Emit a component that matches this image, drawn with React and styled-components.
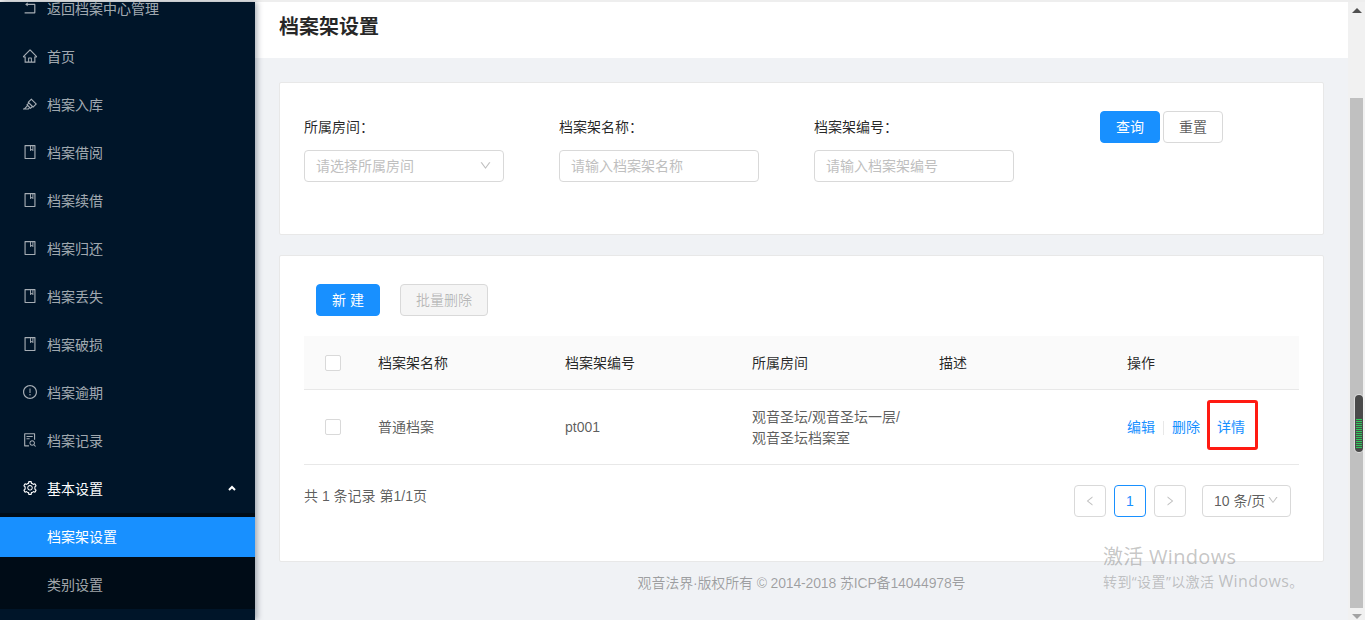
import React from "react";
import styled, { createGlobalStyle } from "styled-components";
import {
  AiOutlineRollback,
  AiOutlineHome,
  AiOutlineHighlight,
  AiOutlineBook,
  AiOutlineExclamationCircle,
  AiOutlineFileSearch,
  AiOutlineSetting,
  AiOutlineDown,
  AiOutlineLeft,
  AiOutlineRight,
} from "react-icons/ai";

const menuItems = [
  { label: "返回档案中心管理", icon: AiOutlineRollback },
  { label: "首页", icon: AiOutlineHome },
  { label: "档案入库", icon: AiOutlineHighlight },
  { label: "档案借阅", icon: AiOutlineBook },
  { label: "档案续借", icon: AiOutlineBook },
  { label: "档案归还", icon: AiOutlineBook },
  { label: "档案丢失", icon: AiOutlineBook },
  { label: "档案破损", icon: AiOutlineBook },
  { label: "档案逾期", icon: AiOutlineExclamationCircle },
  { label: "档案记录", icon: AiOutlineFileSearch },
];

function App() {
  return (
    <Page>
      <GlobalStyle />
      <TopEdge />
      <Body>
        <Sidebar>
          <Menu>
            {menuItems.map((item) => (
              <MenuItem key={item.label}>
                <item.icon size={16} />
                <span>{item.label}</span>
              </MenuItem>
            ))}
            <MenuItem $open>
              <AiOutlineSetting size={16} />
              <span>基本设置</span>
              <Caret viewBox="0 0 8 6" width="8" height="6">
                <polyline points="1,5 4,2 7,5" />
              </Caret>
            </MenuItem>
            <SubMenu>
              <SubItem $active>档案架设置</SubItem>
              <SubItem>类别设置</SubItem>
            </SubMenu>
          </Menu>
        </Sidebar>

        <Main>
          <Header>
            <Title>档案架设置</Title>
          </Header>
          <Content>
            <SearchCard>
              <Field>
                <Label>所属房间：</Label>
                <Input>
                  <span>请选择所属房间</span>
                  <AiOutlineDown size={13} />
                </Input>
              </Field>
              <Field>
                <Label>档案架名称：</Label>
                <Input>
                  <span>请输入档案架名称</span>
                </Input>
              </Field>
              <Field>
                <Label>档案架编号：</Label>
                <Input>
                  <span>请输入档案架编号</span>
                </Input>
              </Field>
              <SearchButtons>
                <Button $primary $width={60}>查询</Button>
                <Button $width={60}>重置</Button>
              </SearchButtons>
            </SearchCard>

            <ListCard>
              <Toolbar>
                <Button $primary $width={64}>新 建</Button>
                <Button $disabled $width={88}>批量删除</Button>
              </Toolbar>
              <Table>
                <colgroup>
                  <col width="62" />
                  <col width="187" />
                  <col width="187" />
                  <col width="187" />
                  <col width="188" />
                  <col width="184" />
                </colgroup>
                <thead>
                  <tr>
                    <th><Checkbox /></th>
                    <th>档案架名称</th>
                    <th>档案架编号</th>
                    <th>所属房间</th>
                    <th>描述</th>
                    <th>操作</th>
                  </tr>
                </thead>
                <tbody>
                  <tr>
                    <td><Checkbox $raised /></td>
                    <td>普通档案</td>
                    <td>pt001</td>
                    <td><RoomPath>观音圣坛/观音圣坛一层/观音圣坛档案室</RoomPath></td>
                    <td></td>
                    <td>
                      <Actions>
                        <ActionLink>编辑</ActionLink>
                        <Divider />
                        <ActionLink>删除</ActionLink>
                        <Marked>详情</Marked>
                      </Actions>
                    </td>
                  </tr>
                </tbody>
              </Table>
              <PageRow>
                <Total>共 1 条记录 第1/1页</Total>
                <Pager>
                  <PageBtn><AiOutlineLeft size={12} /></PageBtn>
                  <PageBtn $current>1</PageBtn>
                  <PageBtn><AiOutlineRight size={12} /></PageBtn>
                  <SizeSelect>
                    <span>10 条/页</span>
                    <AiOutlineDown size={12} />
                  </SizeSelect>
                </Pager>
              </PageRow>
            </ListCard>

            <Footer>观音法界·版权所有 © 2014-2018 苏ICP备14044978号</Footer>
          </Content>
        </Main>

        <ScrollTrack>
          <ArrowUp />
          <Thumb>
            <ThumbMarker />
          </Thumb>
          <ArrowDown />
        </ScrollTrack>
      </Body>

      <Watermark>
        <strong>激活 Windows</strong>
        <span>转到“设置”以激活 <WinWord>Windows</WinWord>。</span>
      </Watermark>
    </Page>
  );
}

const GlobalStyle = createGlobalStyle`
  html, body {
    margin: 0;
    height: 100%;
    overflow: hidden;
  }
  body {
    font-family: "Liberation Sans", "Noto Sans CJK SC", sans-serif;
    font-size: 14px;
    color: rgba(0, 0, 0, 0.65);
  }
  * {
    box-sizing: border-box;
  }
`;

const Page = styled.div`
  position: relative;
  width: 1365px;
  height: 620px;
  overflow: hidden;
  display: flex;
  flex-direction: column;
  background: #f0f2f5;
`;

const TopEdge = styled.div`
  height: 2px;
  flex: none;
  background: #eeeeee;
`;

const Body = styled.div`
  flex: 1;
  min-height: 0;
  display: flex;
`;

const Sidebar = styled.aside`
  width: 255px;
  flex: none;
  background: #001529;
  box-shadow: 2px 0 6px rgba(0, 21, 41, 0.35);
  overflow: hidden;
  position: relative;
  z-index: 2;
`;

const Menu = styled.nav`
  margin-top: -17px;
`;

const MenuItem = styled.div`
  height: 48px;
  display: flex;
  align-items: center;
  padding: 0 0 2px 22px;
  gap: 9px;
  color: ${(p) => (p.$open ? "#fff" : "rgba(255, 255, 255, 0.65)")};
  svg {
    flex: none;
  }
`;

const Caret = styled.svg`
  margin-left: 116px;
  fill: none;
  stroke: #fff;
  stroke-width: 2;
`;

const SubMenu = styled.div`
  background: #000c17;
  padding: 4px 0;
  display: flex;
  flex-direction: column;
  gap: 8px;
`;

const SubItem = styled.div`
  height: 40px;
  line-height: 40px;
  padding-left: 47px;
  background: ${(p) => (p.$active ? "#1890ff" : "transparent")};
  color: ${(p) => (p.$active ? "#fff" : "rgba(255, 255, 255, 0.65)")};
`;

const Main = styled.main`
  flex: 1;
  min-width: 0;
  display: flex;
  flex-direction: column;
`;

const Header = styled.header`
  height: 56px;
  flex: none;
  background: #fff;
  padding: 8px 24px 0;
`;

const Title = styled.h1`
  margin: 0;
  font-size: 20px;
  line-height: 34px;
  font-weight: 600;
  color: rgba(0, 0, 0, 0.85);
`;

const Content = styled.div`
  padding: 24px 24px 0;
`;

const Card = styled.section`
  background: #fff;
  border: 1px solid #e8e8e8;
  border-radius: 2px;
`;

const SearchCard = styled(Card)`
  display: flex;
  align-items: flex-start;
  padding: 28px 24px 52px;
`;

const Field = styled.div`
  width: 255px;
  padding-top: 5px;
`;

const Label = styled.div`
  line-height: 22px;
  margin-bottom: 12px;
  color: rgba(0, 0, 0, 0.85);
`;

const Input = styled.div`
  width: 200px;
  height: 32px;
  padding: 0 11px 2px 11px;
  display: flex;
  align-items: center;
  justify-content: space-between;
  border: 1px solid #d9d9d9;
  border-radius: 4px;
  color: #bfbfbf;
`;

const SearchButtons = styled.div`
  margin-left: 31px;
  display: flex;
  gap: 3px;
`;

const Button = styled.button`
  width: ${(p) => p.$width}px;
  height: 32px;
  padding: 0 0 2px;
  font: inherit;
  border-radius: 4px;
  border: 1px solid ${(p) => (p.$primary ? "#1890ff" : "#d9d9d9")};
  background: ${(p) =>
    p.$primary ? "#1890ff" : p.$disabled ? "#f5f5f5" : "#fff"};
  color: ${(p) =>
    p.$primary ? "#fff" : p.$disabled ? "rgba(0, 0, 0, 0.25)" : "rgba(0, 0, 0, 0.65)"};
`;

const ListCard = styled(Card)`
  margin-top: 20px;
  padding: 28px 24px 44px;
`;

const Toolbar = styled.div`
  display: flex;
  gap: 20px;
  padding-left: 12px;
  margin-bottom: 20px;
`;

const Table = styled.table`
  width: 995px;
  table-layout: fixed;
  border-collapse: collapse;

  th,
  td {
    padding: 2px 12px 0;
    text-align: left;
    border-bottom: 1px solid #e8e8e8;
    line-height: 21px;
  }
  th {
    height: 53px;
    background: #fafafa;
    font-weight: 400;
    color: rgba(0, 0, 0, 0.85);
  }
  td {
    height: 75px;
  }
  th:first-child,
  td:first-child {
    padding-left: 21px;
  }
`;

const Checkbox = styled.span`
  display: block;
  width: 16px;
  height: 16px;
  margin-top: ${(p) => (p.$raised ? "-2px" : "0")};
  background: #fff;
  border: 1px solid #d9d9d9;
  border-radius: 2px;
`;

const RoomPath = styled.div`
  max-width: 155px;
`;

const Actions = styled.div`
  display: flex;
  align-items: center;
`;

const ActionLink = styled.a`
  color: #1890ff;
`;

const Divider = styled.i`
  width: 1px;
  height: 14px;
  margin: 0 8px;
  background: #e8e8e8;
`;

const Marked = styled(ActionLink)`
  position: relative;
  margin-left: 17px;
  &::after {
    content: "";
    position: absolute;
    left: -10px;
    right: -13px;
    top: -17px;
    bottom: -12px;
    border: 3px solid #ff1a12;
    border-radius: 3px;
  }
`;

const PageRow = styled.div`
  margin-top: 20px;
  display: flex;
  justify-content: space-between;
  padding-right: 8px;
`;

const Total = styled.div`
  line-height: 22px;
`;

const Pager = styled.div`
  display: flex;
  gap: 8px;
`;

const PageBtn = styled.div`
  width: 32px;
  height: 32px;
  display: flex;
  align-items: center;
  justify-content: center;
  border: 1px solid ${(p) => (p.$current ? "#1890ff" : "#d9d9d9")};
  border-radius: 4px;
  color: ${(p) => (p.$current ? "#1890ff" : "rgba(0, 0, 0, 0.25)")};
`;

const SizeSelect = styled.div`
  width: 89px;
  height: 32px;
  margin-left: 8px;
  padding: 0 11px 2px;
  display: flex;
  align-items: center;
  justify-content: space-between;
  border: 1px solid #d9d9d9;
  border-radius: 4px;
  white-space: nowrap;
  svg {
    flex: none;
    color: #bfbfbf;
  }
`;

const Footer = styled.footer`
  margin-top: 10px;
  line-height: 22px;
  text-align: center;
  letter-spacing: -0.15px;
  color: rgba(0, 0, 0, 0.35);
`;

const ScrollTrack = styled.div`
  width: 17px;
  flex: none;
  background: #f1f1f1;
  display: flex;
  flex-direction: column;
  align-items: center;
  padding-top: 6px;
`;

const ArrowUp = styled.i`
  width: 0;
  height: 0;
  border-left: 5px solid transparent;
  border-right: 5px solid transparent;
  border-bottom: 5px solid #505050;
`;

const ArrowDown = styled.i`
  width: 0;
  height: 0;
  margin-top: 6px;
  border-left: 5px solid transparent;
  border-right: 5px solid transparent;
  border-top: 5px solid #a3a3a3;
`;

const Thumb = styled.div`
  position: relative;
  width: 13px;
  height: 510px;
  margin-top: 85px;
  background: #c0c0c0;
`;

const ThumbMarker = styled.div`
  position: absolute;
  left: 5px;
  top: 297px;
  width: 8px;
  height: 57px;
  border-radius: 4px;
  background: #4a4a4a;
  box-shadow: 0 0 0 1px rgba(255, 255, 255, 0.45);
  &::after {
    content: "";
    position: absolute;
    left: 1px;
    right: 1px;
    top: 24px;
    bottom: 4px;
    background: repeating-linear-gradient(
      to bottom,
      #2fc95a 0 1px,
      #4a4a4a 1px 2px
    );
  }
`;

const Watermark = styled.div`
  position: absolute;
  left: 1103px;
  top: 544px;
  display: flex;
  flex-direction: column;
  gap: 1px;
  pointer-events: none;
  font-family: "Open Sans", "Noto Sans CJK SC", sans-serif;
  color: rgba(110, 110, 110, 0.4);
  white-space: nowrap;
  strong {
    font-weight: 400;
    font-size: 20px;
    line-height: 26px;
    letter-spacing: 0.3px;
  }
  span {
    font-size: 14px;
    line-height: 20px;
    letter-spacing: 0.4px;
  }
`;

const WinWord = styled.i`
  font-style: normal;
  font-size: 16px;
`;

export default App;
